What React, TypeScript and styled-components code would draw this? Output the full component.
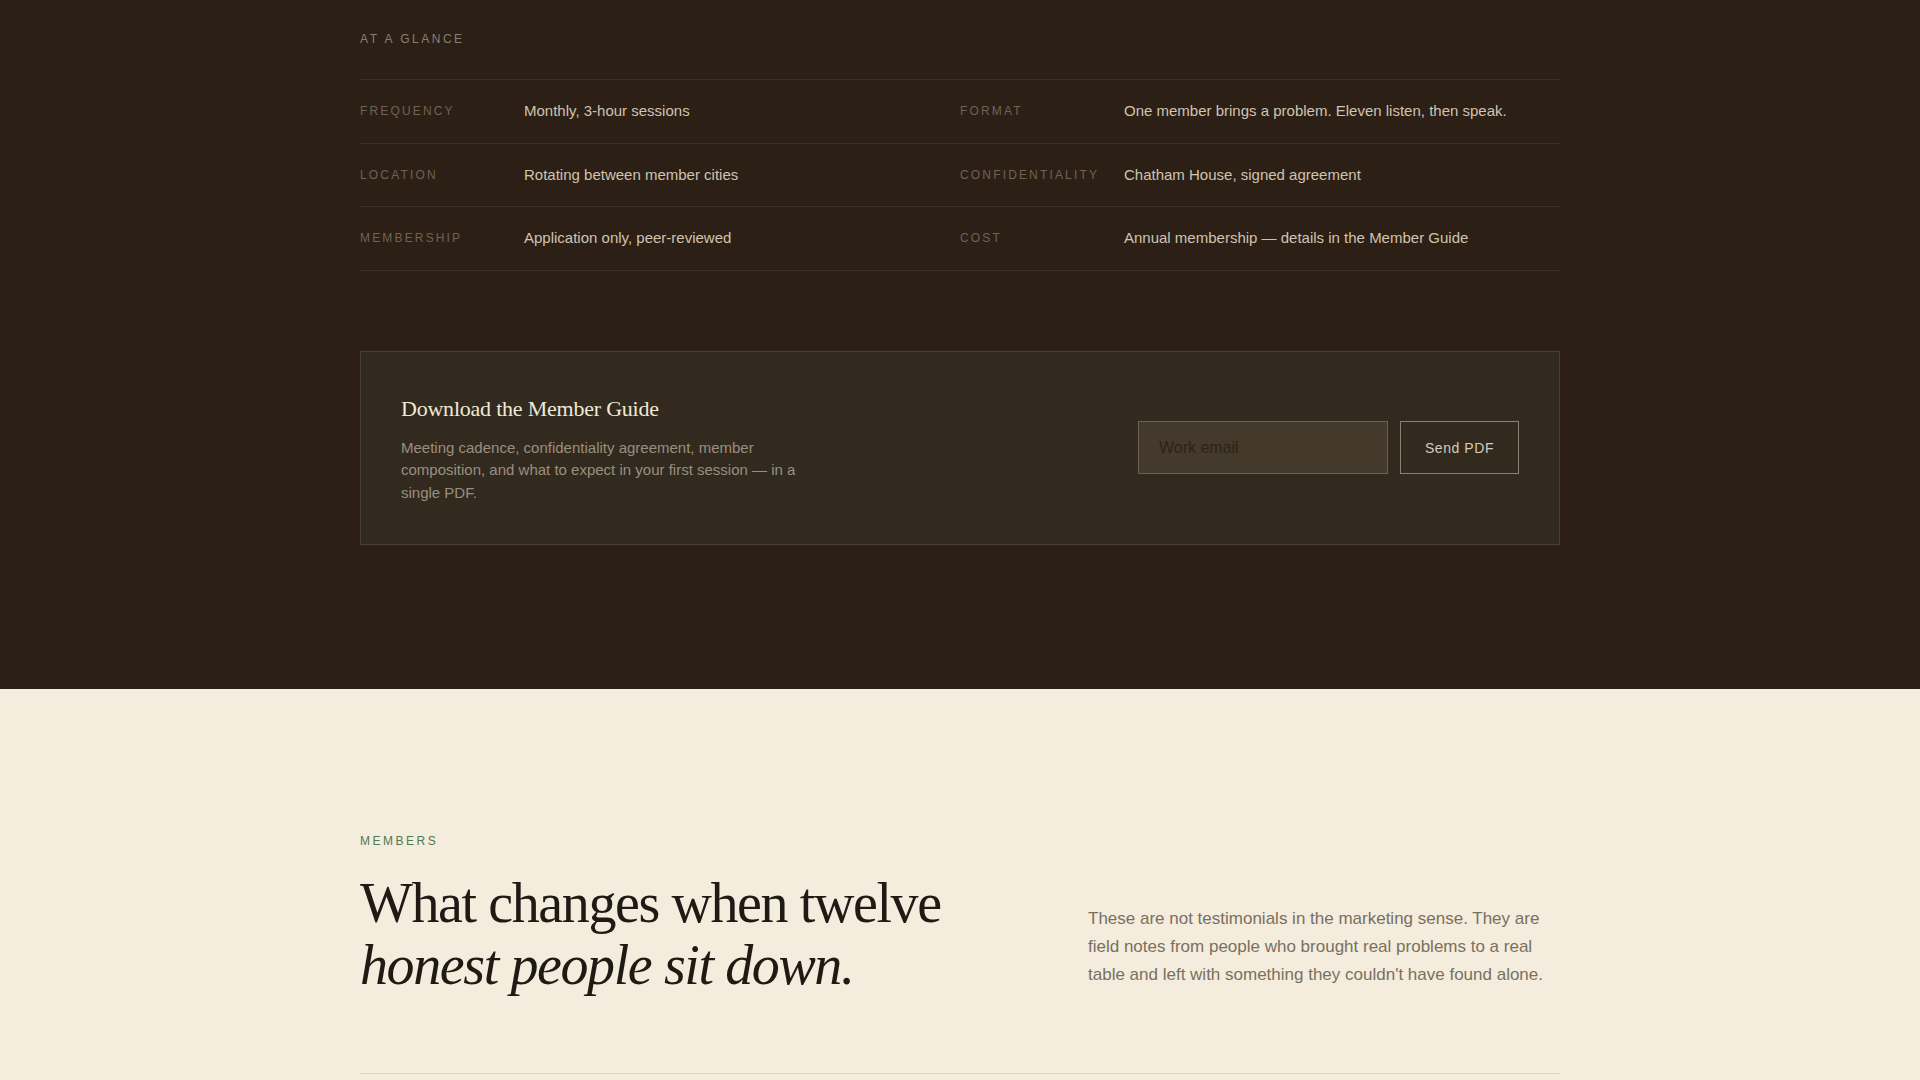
import React from "react";
import styled, { createGlobalStyle } from "styled-components";

const GlobalStyle = createGlobalStyle`
  * {
    box-sizing: border-box;
  }

  body {
    margin: 0;
    background: #f4ecdc;
    font-family: "Liberation Sans", Arial, sans-serif;
    -webkit-font-smoothing: antialiased;
  }
`;

const facts = [
  { label: "Frequency", value: "Monthly, 3-hour sessions" },
  { label: "Format", value: "One member brings a problem. Eleven listen, then speak." },
  { label: "Location", value: "Rotating between member cities" },
  { label: "Confidentiality", value: "Chatham House, signed agreement" },
  { label: "Membership", value: "Application only, peer-reviewed" },
  { label: "Cost", value: "Annual membership — details in the Member Guide" },
];

const App = () => {
  return (
    <>
      <GlobalStyle />
      <Glance>
        <Container>
          <Eyebrow tone="muted">At a glance</Eyebrow>
          <FactGrid>
            {facts.map((f) => (
              <Fact key={f.label}>
                <FactLabel>{f.label}</FactLabel>
                <FactValue>{f.value}</FactValue>
              </Fact>
            ))}
          </FactGrid>

          <GuideCard>
            <div>
              <GuideTitle>Download the Member Guide</GuideTitle>
              <GuideText>
                Meeting cadence, confidentiality agreement, member composition,
                and what to expect in your first session — in a single PDF.
              </GuideText>
            </div>
            <GuideForm onSubmit={(e) => e.preventDefault()}>
              <EmailInput type="email" placeholder="Work email" />
              <SendButton type="submit">Send PDF</SendButton>
            </GuideForm>
          </GuideCard>
        </Container>
      </Glance>

      <Members>
        <Container>
          <Eyebrow tone="green">Members</Eyebrow>
          <MembersHead>
            <Headline>
              What changes when twelve
              <br />
              <em>honest people sit down.</em>
            </Headline>
            <Intro>
              These are not testimonials in the marketing sense. They are field
              notes from people who brought real problems to a real table and
              left with something they couldn't have found alone.
            </Intro>
          </MembersHead>
          <NotesRule />
        </Container>
      </Members>
    </>
  );
};

export default App;

const Container = styled.div`
  width: 1200px;
  margin: 0 auto;
`;

const Glance = styled.section`
  background: #2c1f15;
  padding: 30px 0 144px;
`;

const Eyebrow = styled.p<{ tone: "muted" | "green" }>`
  margin: 0;
  font-size: 12px;
  line-height: 18px;
  letter-spacing: 0.21em;
  text-transform: uppercase;
  color: ${(p) => (p.tone === "green" ? "#4f7a52" : "#8a7f70")};
`;

const FactGrid = styled.div`
  display: grid;
  grid-template-columns: 1fr 1fr;
  margin-top: 31px;
  border-top: 1px solid #3b2f24;
`;

const Fact = styled.div`
  display: grid;
  grid-template-columns: 164px 1fr;
  align-items: center;
  padding: 21px 0;
  border-bottom: 1px solid #3b2f24;
`;

const FactLabel = styled.span`
  font-size: 12px;
  letter-spacing: 0.18em;
  text-transform: uppercase;
  color: #6f6354;
`;

const FactValue = styled.span`
  font-size: 15px;
  line-height: 20.5px;
  color: #cfc4b0;
`;

const GuideCard = styled.div`
  display: flex;
  justify-content: space-between;
  align-items: center;
  margin-top: 80px;
  padding: 40px;
  background: #322a1e;
  border: 1px solid #454231;
`;

const GuideTitle = styled.h3`
  margin: 0;
  font-family: "Liberation Serif", "Times New Roman", serif;
  font-weight: 400;
  font-size: 22px;
  line-height: 33px;
  letter-spacing: -0.01em;
  color: #f0e8d8;
`;

const GuideText = styled.p`
  margin: 12px 0 0;
  max-width: 420px;
  font-size: 15px;
  line-height: 22.5px;
  color: #9a8f7e;
`;

const GuideForm = styled.form`
  display: flex;
  gap: 12px;
`;

const EmailInput = styled.input`
  width: 250px;
  height: 53px;
  padding: 0 20px;
  background: #433a2c;
  border: 1px solid #6a6250;
  border-radius: 0;
  font-family: inherit;
  font-size: 16px;
  color: #e6dccb;
  outline: none;

  &::placeholder {
    color: #2b2319;
  }
`;

const SendButton = styled.button`
  height: 53px;
  padding: 0 24px;
  background: transparent;
  border: 1px solid #8a8170;
  border-radius: 0;
  font-family: inherit;
  font-size: 14px;
  letter-spacing: 0.04em;
  color: #d5ccb9;
  cursor: pointer;
`;

const Members = styled.section`
  background: #f4ecdc;
  padding: 143px 0 40px;
`;

const MembersHead = styled.div`
  display: flex;
  justify-content: space-between;
  align-items: flex-end;
  margin-top: 23px;
`;

const Headline = styled.h2`
  margin: 0;
  font-family: "Liberation Serif", "Times New Roman", serif;
  font-weight: 400;
  font-size: 56px;
  line-height: 1.1;
  letter-spacing: -0.025em;
  color: #1f1a14;

  em {
    font-style: italic;
  }
`;

const Intro = styled.p`
  margin: 0;
  width: 472px;
  padding-bottom: 8px;
  font-size: 17px;
  line-height: 27.6px;
  color: #7a7060;
`;

const NotesRule = styled.hr`
  margin: 77px 0 0;
  border: 0;
  border-top: 1px solid #ddd3c2;
`;
